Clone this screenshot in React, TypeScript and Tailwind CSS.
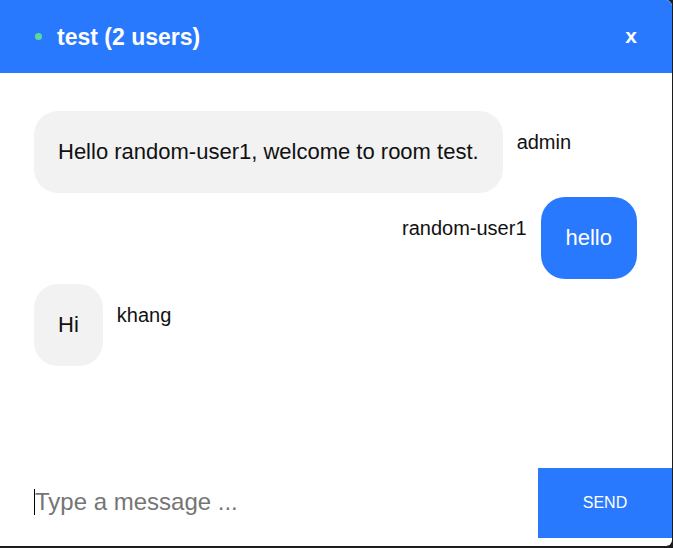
export default function App() {
    const font = { fontFamily: '"Liberation Sans", Arial, sans-serif' };

    return (
        <div className="w-[673px] h-[548px] bg-[#1c1c1c]" style={font}>
            <div className="w-[672px] h-[546px] bg-white rounded-r-[6px] overflow-hidden flex flex-col">
                {/* header */}
                <div className="h-[73px] bg-[#2979ff] flex items-center pl-[35px] pr-[35px] shrink-0">
                    <span className="w-[7px] h-[7px] rounded-full bg-[#5bd99b] mr-[15px]" />
                    <span className="text-white font-bold text-[23px] leading-none pt-[1px]">test (2 users)</span>
                    <button className="ml-auto text-white font-bold text-[21px] leading-none pb-[2px]">x</button>
                </div>

                {/* messages */}
                <div className="flex-1 pt-[38px] pl-[34px] pr-[35px] flex flex-col">
                    <div className="flex items-start">
                        <div className="bg-[#f2f2f2] rounded-[24px] px-[24px] py-[28px] text-[22px] leading-[26px] text-[#111]">
                            Hello random-user1, welcome to room test.
                        </div>
                        <span className="ml-[14px] mt-[20px] text-[20px] leading-[23px] text-[#111]">admin</span>
                    </div>

                    <div className="flex items-start justify-end mt-[4px]">
                        <span className="mr-[14px] mt-[20px] text-[20px] leading-[23px] text-[#111]">random-user1</span>
                        <div className="bg-[#2979ff] rounded-[24px] px-[25px] py-[28px] text-[22px] leading-[26px] text-white">
                            hello
                        </div>
                    </div>

                    <div className="flex items-start mt-[5px]">
                        <div className="bg-[#f2f2f2] rounded-[24px] px-[24px] py-[28px] text-[22px] leading-[26px] text-[#111]">
                            Hi
                        </div>
                        <span className="ml-[14px] mt-[20px] text-[20px] leading-[23px] text-[#111]">khang</span>
                    </div>
                </div>

                {/* input */}
                <div className="h-[70px] flex mb-[8px] shrink-0">
                    <div className="flex-1 flex items-center pl-[34px] pb-[3px]">
                        <span className="w-px h-[26px] bg-black" />
                        <input
                            className="flex-1 outline-none text-[24px] text-[#111] placeholder:text-[#757575] bg-transparent"
                            placeholder="Type a message ..."
                            style={font}
                        />
                    </div>
                    <button className="w-[134px] bg-[#2979ff] text-white text-[16px]">SEND</button>
                </div>
            </div>
        </div>
    );
}
